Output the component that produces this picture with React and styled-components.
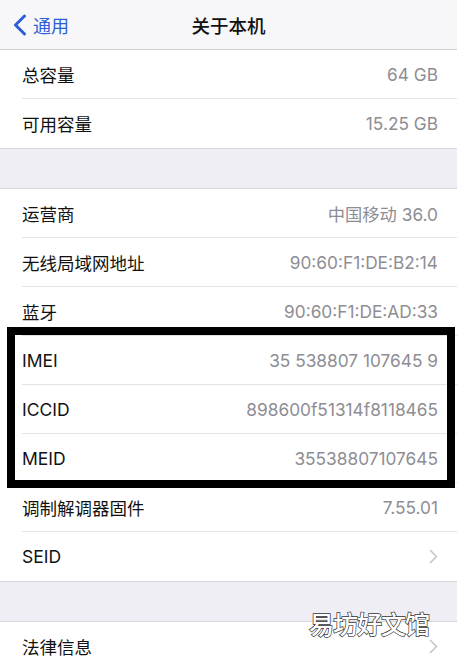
import React from "react";
import styled, { createGlobalStyle } from "styled-components";

const GlobalStyle = createGlobalStyle`
  *, *::before, *::after {
    box-sizing: border-box;
  }
  html, body {
    margin: 0;
    padding: 0;
    background: #efeef4;
    overflow: hidden;
  }
  body {
    font-family: Inter, "Noto Sans CJK SC", sans-serif;
  }
`;

const Screen = styled.div`
  width: 457px;
  height: 657px;
  overflow: hidden;
  background: #efeef4;
`;

const NavBar = styled.div`
  height: 50px;
  background: #f7f6f9;
  border-bottom: 1px solid #cfced3;
  display: grid;
  grid-template-columns: 1fr auto 1fr;
  align-items: center;
`;

const Back = styled.div`
  display: flex;
  align-items: center;
  gap: 6px;
  padding-left: 13px;
  color: #2c5ed6;
  font-family: "Noto Sans CJK SC", sans-serif;
  font-size: 18px;
`;

const Title = styled.div`
  font-family: "Noto Sans CJK SC", sans-serif;
  font-size: 18.5px;
  font-weight: 500;
  color: #111;
`;

const Group = styled.div`
  background: #fff;
  position: relative;
  border-bottom: ${(p) => (p.$last ? "none" : "1px solid #d6d5da")};
  border-top: ${(p) => (p.$top ? "1px solid #d6d5da" : "none")};
`;

const Gap = styled.div`
  height: 39px;
`;

const Row = styled.div`
  height: 49px;
  margin-left: 22px;
  padding-right: 19px;
  display: flex;
  align-items: center;
  justify-content: space-between;
  border-bottom: ${(p) => (p.$end ? "none" : "1px solid #e3e2e6")};
`;

const Label = styled.span`
  font-family: ${(p) =>
    p.$latin ? `Inter, "Noto Sans CJK SC", sans-serif` : `"Noto Sans CJK SC", sans-serif`};
  font-size: 17.5px;
  color: #111;
`;

const Value = styled.span`
  font-family: Inter, "Noto Sans CJK SC", sans-serif;
  font-size: 17.3px;
  color: #8e8d93;
`;

const Chevron = styled.svg`
  width: 9px;
  height: 15px;
`;

const Frame = styled.div`
  position: absolute;
  top: -9px;
  bottom: -5px;
  left: 7px;
  right: 2px;
  border: 8px solid #000;
  pointer-events: none;
`;

const Highlight = styled.div`
  position: relative;
`;

const Watermark = styled.div`
  position: absolute;
  right: 28px;
  top: -17px;
  font-family: "Noto Sans CJK SC", sans-serif;
  font-size: 25px;
  font-weight: 500;
  letter-spacing: -1px;
  color: #fff;
  -webkit-text-stroke: 1.4px #333;
  paint-order: stroke fill;
  z-index: 2;
`;

const RowChevron = () => (
  <Chevron viewBox="0 0 9 15">
    <path d="M1.5 1.5 L7.5 7.5 L1.5 13.5" fill="none" stroke="#c5c4c9" strokeWidth="1.6" strokeLinecap="round" strokeLinejoin="round" />
  </Chevron>
);

export default function App() {
  return (
    <Screen>
      <GlobalStyle />
      <NavBar>
        <Back>
          <svg width="14" height="22" viewBox="0 0 14 22">
            <path d="M11.5 2 L2.5 11 L11.5 20" fill="none" stroke="#2c5ed6" strokeWidth="3" strokeLinecap="round" strokeLinejoin="round" />
          </svg>
          通用
        </Back>
        <Title>关于本机</Title>
        <div />
      </NavBar>

      <Group>
        <Row>
          <Label>总容量</Label>
          <Value>64 GB</Value>
        </Row>
        <Row $end>
          <Label>可用容量</Label>
          <Value>15.25 GB</Value>
        </Row>
      </Group>

      <Gap />

      <Group $top>
        <Row>
          <Label>运营商</Label>
          <Value>中国移动 36.0</Value>
        </Row>
        <Row>
          <Label>无线局域网地址</Label>
          <Value>90:60:F1:DE:B2:14</Value>
        </Row>
        <Row>
          <Label>蓝牙</Label>
          <Value>90:60:F1:DE:AD:33</Value>
        </Row>
        <Highlight>
          <Row>
            <Label $latin>IMEI</Label>
            <Value>35 538807 107645 9</Value>
          </Row>
          <Row>
            <Label $latin>ICCID</Label>
            <Value>898600f51314f8118465</Value>
          </Row>
          <Row>
            <Label $latin>MEID</Label>
            <Value>35538807107645</Value>
          </Row>
          <Frame />
        </Highlight>
        <Row>
          <Label>调制解调器固件</Label>
          <Value>7.55.01</Value>
        </Row>
        <Row $end>
          <Label $latin>SEID</Label>
          <RowChevron />
        </Row>
      </Group>

      <Gap />

      <Group $top $last>
        <Watermark>易坊好文馆</Watermark>
        <Row $end>
          <Label>法律信息</Label>
          <RowChevron />
        </Row>
      </Group>
    </Screen>
  );
}
